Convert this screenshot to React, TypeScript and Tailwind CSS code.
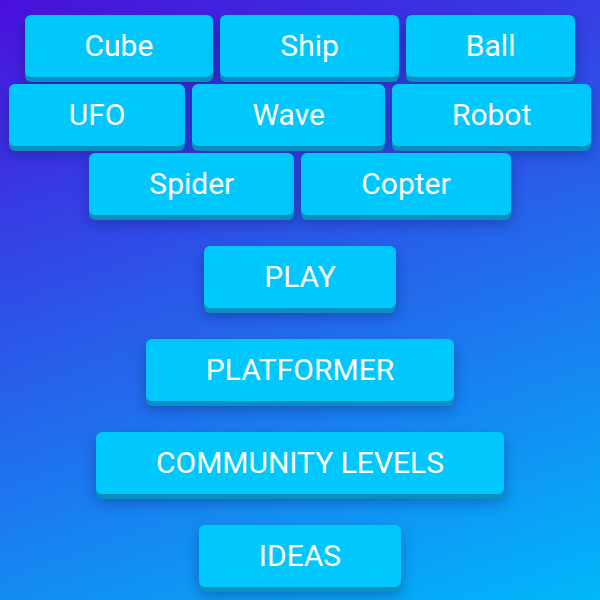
const modes = ['Cube', 'Ship', 'Ball', 'UFO', 'Wave', 'Robot', 'Spider', 'Copter'];
const menu = ['PLAY', 'PLATFORMER', 'COMMUNITY LEVELS', 'IDEAS'];

const btn =
  'h-[62px] px-[60px] rounded-[6px] bg-[#00c8fc] text-white text-[30px] leading-none whitespace-nowrap shadow-[0_5px_0_#0b8fbf,0_8px_14px_rgba(10,20,90,0.35)]';

function App() {
  return (
    <div
      className="w-[600px] h-[600px] overflow-hidden bg-[linear-gradient(160deg,#4a10dc,#00b8fa)] flex flex-col items-center pt-[15px] gap-[31px]"
      style={{ fontFamily: 'Roboto, "Liberation Sans", sans-serif' }}
    >
      {/* mode selector */}
      <div className="w-full flex flex-wrap justify-center gap-[7px]">
        {modes.map((m) => (
          <button key={m} className={btn}>
            {m}
          </button>
        ))}
      </div>

      {menu.map((m) => (
        <button key={m} className={btn}>
          {m}
        </button>
      ))}
    </div>
  );
}

export default App;
